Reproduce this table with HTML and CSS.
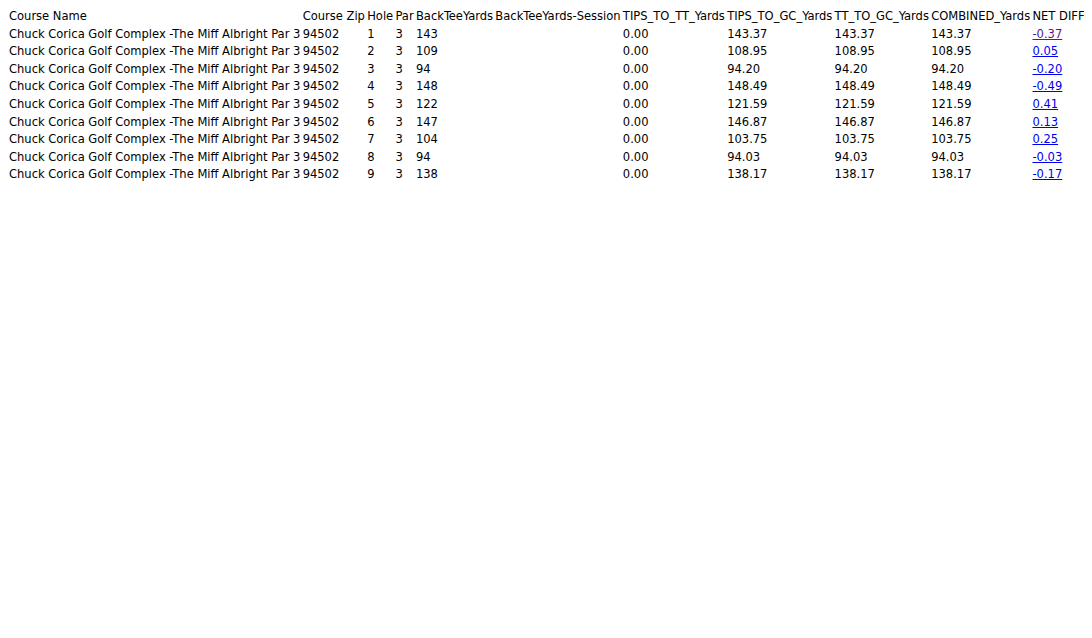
FILE: index.html
```html
<!DOCTYPE html>
<html>
<head>
<meta charset="utf-8">
<link rel="stylesheet" href="styles.css">
</head>
<body>
<table class="grid">
<thead>
<tr><td>Course Name</td><td>Course Zip</td><td>Hole</td><td>Par</td><td>BackTeeYards</td><td>BackTeeYards-Session</td><td>TIPS_TO_TT_Yards</td><td>TIPS_TO_GC_Yards</td><td>TT_TO_GC_Yards</td><td>COMBINED_Yards</td><td>NET DIFFERENCE</td></tr>
</thead>
<tbody>
<tr><td>Chuck Corica Golf Complex -The Miff Albright Par 3</td><td>94502</td><td>1</td><td>3</td><td>143</td><td></td><td>0.00</td><td>143.37</td><td>143.37</td><td>143.37</td><td><a class="visited" href="#">-0.37</a></td></tr>
<tr><td>Chuck Corica Golf Complex -The Miff Albright Par 3</td><td>94502</td><td>2</td><td>3</td><td>109</td><td></td><td>0.00</td><td>108.95</td><td>108.95</td><td>108.95</td><td><a href="#">0.05</a></td></tr>
<tr><td>Chuck Corica Golf Complex -The Miff Albright Par 3</td><td>94502</td><td>3</td><td>3</td><td>94</td><td></td><td>0.00</td><td>94.20</td><td>94.20</td><td>94.20</td><td><a href="#">-0.20</a></td></tr>
<tr><td>Chuck Corica Golf Complex -The Miff Albright Par 3</td><td>94502</td><td>4</td><td>3</td><td>148</td><td></td><td>0.00</td><td>148.49</td><td>148.49</td><td>148.49</td><td><a href="#">-0.49</a></td></tr>
<tr><td>Chuck Corica Golf Complex -The Miff Albright Par 3</td><td>94502</td><td>5</td><td>3</td><td>122</td><td></td><td>0.00</td><td>121.59</td><td>121.59</td><td>121.59</td><td><a href="#">0.41</a></td></tr>
<tr><td>Chuck Corica Golf Complex -The Miff Albright Par 3</td><td>94502</td><td>6</td><td>3</td><td>147</td><td></td><td>0.00</td><td>146.87</td><td>146.87</td><td>146.87</td><td><a href="#">0.13</a></td></tr>
<tr><td>Chuck Corica Golf Complex -The Miff Albright Par 3</td><td>94502</td><td>7</td><td>3</td><td>104</td><td></td><td>0.00</td><td>103.75</td><td>103.75</td><td>103.75</td><td><a href="#">0.25</a></td></tr>
<tr><td>Chuck Corica Golf Complex -The Miff Albright Par 3</td><td>94502</td><td>8</td><td>3</td><td>94</td><td></td><td>0.00</td><td>94.03</td><td>94.03</td><td>94.03</td><td><a href="#">-0.03</a></td></tr>
<tr><td>Chuck Corica Golf Complex -The Miff Albright Par 3</td><td>94502</td><td>9</td><td>3</td><td>138</td><td></td><td>0.00</td><td>138.17</td><td>138.17</td><td>138.17</td><td><a href="#">-0.17</a></td></tr>
</tbody>
</table>
</body>
</html>
```
FILE: styles.css
```css
html, body {
  background: #ffffff;
}
body {
  margin: 8px;
  font-family: "DejaVu Sans Condensed", "DejaVu Sans", sans-serif;
  font-stretch: condensed;
  font-size: 12.8px;
  color: #000000;
}
.grid {
  border-collapse: separate;
  border-spacing: 0;
}
.grid td {
  padding: 0 1.3px 2px 1px;
  white-space: nowrap;
  text-align: left;
  vertical-align: middle;
  line-height: 15.6px;
}
.grid a {
  color: #0000ee;
  text-decoration: underline;
}
.grid a.visited {
  color: #551a8b;
}
```
